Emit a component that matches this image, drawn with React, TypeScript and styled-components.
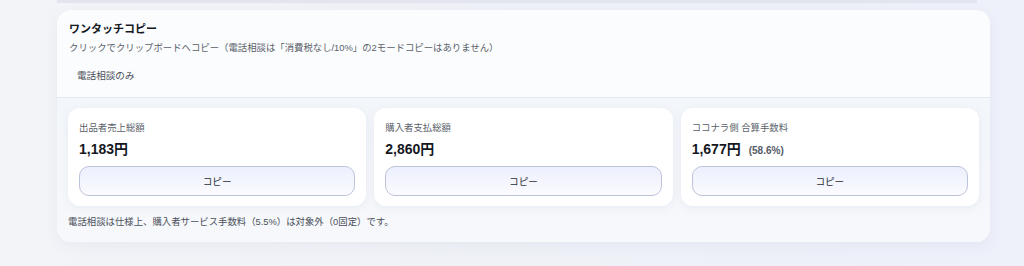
import styled, { createGlobalStyle } from "styled-components";

const GlobalStyle = createGlobalStyle`
  html, body {
    margin: 0;
    padding: 0;
  }
  body {
    background: linear-gradient(90deg, #f3f4f8 0%, #eff1f7 50%, #eef0fa 100%);
    font-family: "Liberation Sans", "Noto Sans CJK JP", sans-serif;
    color: #1f2430;
    height: 266px;
    overflow: hidden;
  }
`;

const cards = [
  { label: "出品者売上総額", value: "1,183円" },
  { label: "購入者支払総額", value: "2,860円" },
  { label: "ココナラ側 合算手数料", value: "1,677円", note: "(58.6%)" },
];

function App() {
  return (
    <Page>
      <GlobalStyle />
      <PrevEdge />
      <Panel>
        <Header>
          <Title>ワンタッチコピー</Title>
          <Subtitle>
            クリックでクリップボードへコピー（電話相談は「消費税なし/10%」の2モードコピーはありません）
          </Subtitle>
          <Tab>電話相談のみ</Tab>
        </Header>
        <Body>
          <CardRow>
            {cards.map((c) => (
              <Card key={c.label}>
                <Label>{c.label}</Label>
                <Value>
                  {c.value}
                  {c.note && <Note>{c.note}</Note>}
                </Value>
                <CopyButton>コピー</CopyButton>
              </Card>
            ))}
          </CardRow>
          <Footnote>
            電話相談は仕様上、購入者サービス手数料（5.5%）は対象外（0固定）です。
          </Footnote>
        </Body>
      </Panel>
    </Page>
  );
}

export default App;

const Page = styled.div`
  display: flex;
  flex-direction: column;
  padding-left: 57px;
  width: 933px;
`;

const PrevEdge = styled.div`
  height: 3px;
  width: 920px;
  background: #e3e5ee;
  margin-bottom: 7px;
`;

const Panel = styled.section`
  height: 232px;
  border-radius: 14px;
  background: #fbfcfd;
  box-shadow: 0 4px 14px rgba(120, 130, 170, 0.08);
  overflow: hidden;
  display: flex;
  flex-direction: column;
`;

const Header = styled.div`
  padding: 12px 12px 0 12px;
  height: 75px;
  border-bottom: 1px solid #e4e9ef;
  display: flex;
  flex-direction: column;
`;

const Title = styled.h2`
  margin: 0;
  font-size: 11px;
  font-weight: 700;
  line-height: 14px;
  color: #15181f;
`;

const Subtitle = styled.p`
  margin: 5px 0 0 0;
  font-size: 9.4px;
  line-height: 14px;
  color: #5a5f6a;
`;

const Tab = styled.div`
  margin-top: 14px;
  padding: 0 8px;
  font-size: 9.6px;
  line-height: 14px;
  color: #4a4f5a;
`;

const Body = styled.div`
  flex: 1;
  background: linear-gradient(180deg, #f3f6fa 0%, #f6f8fb 100%);
  padding: 10px 11px 0 11px;
  display: flex;
  flex-direction: column;
`;

const CardRow = styled.div`
  display: grid;
  grid-template-columns: repeat(3, 1fr);
  gap: 8px;
`;

const Card = styled.div`
  height: 98px;
  box-sizing: border-box;
  background: #ffffff;
  border-radius: 12px;
  box-shadow: 0 2px 8px rgba(140, 150, 190, 0.12);
  padding: 13px 11px 10px 11px;
  display: flex;
  flex-direction: column;
`;

const Label = styled.div`
  font-size: 9.4px;
  line-height: 14px;
  color: #5a5f6a;
`;

const Value = styled.div`
  margin-top: 6px;
  font-size: 14px;
  font-weight: 700;
  line-height: 17px;
  color: #15181f;
  display: flex;
  align-items: baseline;
`;

const Note = styled.span`
  margin-left: 8px;
  font-size: 10px;
  font-weight: 700;
  color: #555a66;
`;

const CopyButton = styled.button`
  margin-top: auto;
  height: 30px;
  width: 100%;
  border: 1px solid #bcc2da;
  border-radius: 10px;
  background: linear-gradient(180deg, #eceffd 0%, #f5f6fd 60%, #fbfbff 100%);
  font-family: "Liberation Sans", "Noto Sans CJK JP", sans-serif;
  font-size: 9.6px;
  color: #2a2e38;
  cursor: pointer;
`;

const Footnote = styled.p`
  margin: 9px 0 0 0;
  font-size: 9.4px;
  line-height: 14px;
  color: #4a4f5a;
`;
